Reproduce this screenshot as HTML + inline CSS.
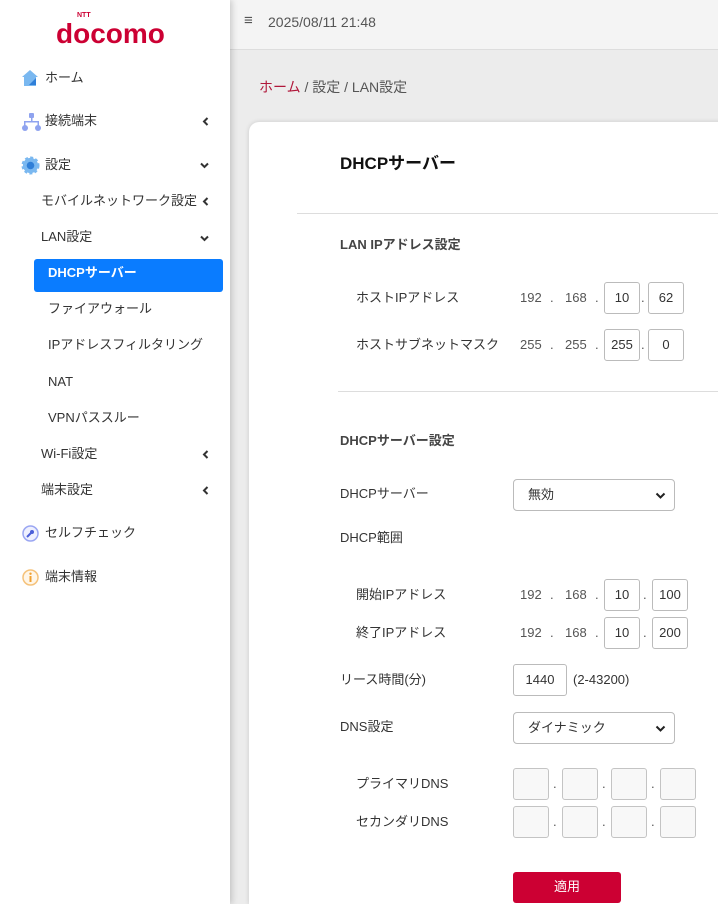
<!DOCTYPE html>
<html><head><meta charset="utf-8"><style>
*{box-sizing:border-box;margin:0;padding:0}
html,body{width:718px;height:904px;overflow:hidden}
body{background:#ececec;font-family:"Liberation Sans","Noto Sans CJK JP",sans-serif;color:#333;position:relative}
.a{position:absolute;white-space:nowrap;line-height:16px}
#side{position:absolute;left:0;top:0;width:230px;height:904px;background:#fff;box-shadow:2px 0 6px rgba(0,0,0,.18);z-index:3}
#top{position:absolute;left:230px;top:0;width:488px;height:50px;background:#f4f4f4;border-bottom:1px solid #ddd}
.si{font-size:13px;color:#333}
#card{position:absolute;left:249px;top:122px;width:480px;height:782px;background:#fff;border-radius:10px 0 0 0;box-shadow:0 0 5px rgba(0,0,0,.15)}
.t{font-size:13px;color:#333}
.g{font-size:13px;color:#555}
.box{position:absolute;width:36px;height:32px;border:1px solid #bbb;border-radius:3px;font-size:13px;text-align:center;line-height:30px;background:#fff}
.dis{background:#f8f8f8;border-color:#c4c4c4}
.sel{position:absolute;width:162px;height:32px;border:1px solid #bbb;border-radius:4px;font-size:13px;line-height:30px;padding-left:14px;background:#fff}
.sel svg{position:absolute;right:8px;top:12px}
.dot{font-size:13px;color:#555}
</style></head><body>
<div id="side">
<div class="a" style="left:56px;top:18px;font-size:28px;font-weight:bold;color:#cc0033;line-height:32px">docomo</div>
<div class="a" style="left:77px;top:12px;font-size:7px;font-weight:bold;color:#cc0033;line-height:8px">NTT</div>
<svg class="a" style="left:21px;top:69px" width="18" height="18" viewBox="0 0 18 18"><path d="M9 1 L1 8 H3 V17 H15 V8 H17 Z" fill="#7ab8f0"/><path d="M8 16 L15 9 V16 Z" fill="#2f7fd8"/></svg>
<div class="a si" style="left:45px;top:70px">ホーム</div>
<svg class="a" style="left:21px;top:112px" width="20" height="20" viewBox="0 0 20 20" fill="#8fa3ef"><rect x="8" y="1" width="5" height="5" rx="1"/><rect x="10" y="6" width="1.5" height="4"/><rect x="3" y="9" width="15" height="1.5"/><rect x="3" y="9" width="1.5" height="5"/><rect x="16.5" y="9" width="1.5" height="5"/><circle cx="4" cy="16" r="3"/><circle cx="17" cy="16" r="3"/></svg>
<div class="a si" style="left:45px;top:113px">接続端末</div>
<svg class="a" style="left:202px;top:117px" width="7" height="9" viewBox="0 0 7 9"><path d="M5.5 1 L2 4.5 L5.5 8" stroke="#333" stroke-width="2" fill="none"/></svg>
<svg class="a" style="left:21px;top:156px" width="19" height="19" viewBox="0 0 20 20"><circle cx="10" cy="10" r="8" fill="#7ab8f0" stroke="#7ab8f0" stroke-width="3" stroke-dasharray="3 2.3"/><circle cx="10" cy="10" r="4" fill="#2f7fd8"/></svg>
<div class="a si" style="left:45px;top:157px">設定</div>
<svg class="a" style="left:200px;top:162px" width="9" height="7" viewBox="0 0 9 7"><path d="M1 1.5 L4.5 5 L8 1.5" stroke="#333" stroke-width="2" fill="none"/></svg>
<div class="a si" style="left:41px;top:193px">モバイルネットワーク設定</div>
<svg class="a" style="left:202px;top:197px" width="7" height="9" viewBox="0 0 7 9"><path d="M5.5 1 L2 4.5 L5.5 8" stroke="#333" stroke-width="2" fill="none"/></svg>
<div class="a si" style="left:41px;top:229px">LAN設定</div>
<svg class="a" style="left:200px;top:235px" width="9" height="7" viewBox="0 0 9 7"><path d="M1 1.5 L4.5 5 L8 1.5" stroke="#333" stroke-width="2" fill="none"/></svg>
<div class="a" style="left:34px;top:259px;width:189px;height:33px;background:#0a7cff;border-radius:3px"></div>
<div class="a" style="left:48px;top:265px;font-size:13px;font-weight:bold;color:#fff">DHCPサーバー</div>
<div class="a si" style="left:48px;top:301px">ファイアウォール</div>
<div class="a si" style="left:48px;top:337px">IPアドレスフィルタリング</div>
<div class="a si" style="left:48px;top:374px">NAT</div>
<div class="a si" style="left:48px;top:410px">VPNパススルー</div>
<div class="a si" style="left:41px;top:446px">Wi-Fi設定</div>
<svg class="a" style="left:202px;top:450px" width="7" height="9" viewBox="0 0 7 9"><path d="M5.5 1 L2 4.5 L5.5 8" stroke="#333" stroke-width="2" fill="none"/></svg>
<div class="a si" style="left:41px;top:482px">端末設定</div>
<svg class="a" style="left:202px;top:486px" width="7" height="9" viewBox="0 0 7 9"><path d="M5.5 1 L2 4.5 L5.5 8" stroke="#333" stroke-width="2" fill="none"/></svg>
<svg class="a" style="left:22px;top:525px" width="17" height="17" viewBox="0 0 17 17"><circle cx="8.5" cy="8.5" r="7.5" fill="#eef0ff" stroke="#9aa6f2" stroke-width="1.5"/><path d="M5 12 L9 8" stroke="#4b5fd8" stroke-width="2"/><circle cx="10" cy="7" r="2" fill="#4b5fd8"/></svg>
<div class="a si" style="left:45px;top:525px">セルフチェック</div>
<svg class="a" style="left:22px;top:569px" width="17" height="17" viewBox="0 0 17 17"><circle cx="8.5" cy="8.5" r="7.5" fill="#fff6e8" stroke="#f5c27a" stroke-width="1.5"/><rect x="7.5" y="7" width="2" height="6" fill="#f0a030"/><circle cx="8.5" cy="4.7" r="1.2" fill="#f0a030"/></svg>
<div class="a si" style="left:45px;top:569px">端末情報</div>
</div>
<div id="top"></div>
<div class="a" style="left:244px;top:13px;font-size:15px;color:#555">&#8801;</div>
<div class="a" style="left:268px;top:14px;font-size:14px;color:#555">2025/08/11 21:48</div>
<div class="a" style="left:259px;top:79px;font-size:14px;color:#555"><span style="color:#b0173a">ホーム</span> / 設定 / LAN設定</div>
<div id="card"></div>
<div class="a" style="left:340px;top:155px;font-size:17px;font-weight:bold;color:#111;line-height:18px">DHCPサーバー</div>
<div class="a" style="left:297px;top:213px;width:421px;height:1px;background:#ddd"></div>
<div class="a" style="left:340px;top:237px;font-size:13px;font-weight:bold;color:#444">LAN IPアドレス設定</div>

<div class="a t" style="left:356px;top:290px">ホストIPアドレス</div>
<div class="a g" style="left:520px;top:290px">192</div><div class="a g" style="left:550px;top:290px">.</div><div class="a g" style="left:565px;top:290px">168</div><div class="a g" style="left:595px;top:290px">.</div>
<div class="box" style="left:604px;top:282px">10</div><div class="a dot" style="left:641px;top:290px">.</div><div class="box" style="left:648px;top:282px">62</div>

<div class="a t" style="left:356px;top:337px">ホストサブネットマスク</div>
<div class="a g" style="left:520px;top:337px">255</div><div class="a g" style="left:550px;top:337px">.</div><div class="a g" style="left:565px;top:337px">255</div><div class="a g" style="left:595px;top:337px">.</div>
<div class="box" style="left:604px;top:329px">255</div><div class="a dot" style="left:641px;top:337px">.</div><div class="box" style="left:648px;top:329px">0</div>

<div class="a" style="left:338px;top:391px;width:380px;height:1px;background:#ddd"></div>
<div class="a" style="left:340px;top:433px;font-size:13px;font-weight:bold;color:#444">DHCPサーバー設定</div>
<div class="a t" style="left:340px;top:486px">DHCPサーバー</div>
<div class="sel" style="left:513px;top:479px">無効<svg width="11" height="8" viewBox="0 0 11 8"><path d="M1.5 1.5 L5.5 5.5 L9.5 1.5" stroke="#222" stroke-width="2" fill="none"/></svg></div>
<div class="a t" style="left:340px;top:530px">DHCP範囲</div>

<div class="a t" style="left:356px;top:587px">開始IPアドレス</div>
<div class="a g" style="left:520px;top:587px">192</div><div class="a g" style="left:550px;top:587px">.</div><div class="a g" style="left:565px;top:587px">168</div><div class="a g" style="left:595px;top:587px">.</div>
<div class="box" style="left:604px;top:579px">10</div><div class="a dot" style="left:643px;top:587px">.</div><div class="box" style="left:652px;top:579px">100</div>

<div class="a t" style="left:356px;top:625px">終了IPアドレス</div>
<div class="a g" style="left:520px;top:625px">192</div><div class="a g" style="left:550px;top:625px">.</div><div class="a g" style="left:565px;top:625px">168</div><div class="a g" style="left:595px;top:625px">.</div>
<div class="box" style="left:604px;top:617px">10</div><div class="a dot" style="left:643px;top:625px">.</div><div class="box" style="left:652px;top:617px">200</div>

<div class="a t" style="left:340px;top:672px">リース時間(分)</div>
<div class="box" style="left:513px;top:664px;width:54px">1440</div>
<div class="a t" style="left:573px;top:672px">(2-43200)</div>
<div class="a t" style="left:340px;top:719px">DNS設定</div>
<div class="sel" style="left:513px;top:712px">ダイナミック<svg width="11" height="8" viewBox="0 0 11 8"><path d="M1.5 1.5 L5.5 5.5 L9.5 1.5" stroke="#222" stroke-width="2" fill="none"/></svg></div>
<div class="a t" style="left:356px;top:776px">プライマリDNS</div>
<div class="box dis" style="left:513px;top:768px"></div><div class="a dot" style="left:553px;top:776px">.</div>
<div class="box dis" style="left:562px;top:768px"></div><div class="a dot" style="left:602px;top:776px">.</div>
<div class="box dis" style="left:611px;top:768px"></div><div class="a dot" style="left:651px;top:776px">.</div>
<div class="box dis" style="left:660px;top:768px"></div>
<div class="a t" style="left:356px;top:814px">セカンダリDNS</div>
<div class="box dis" style="left:513px;top:806px"></div><div class="a dot" style="left:553px;top:814px">.</div>
<div class="box dis" style="left:562px;top:806px"></div><div class="a dot" style="left:602px;top:814px">.</div>
<div class="box dis" style="left:611px;top:806px"></div><div class="a dot" style="left:651px;top:814px">.</div>
<div class="box dis" style="left:660px;top:806px"></div>
<div class="a" style="left:513px;top:872px;width:108px;height:31px;background:#cc0033;border-radius:3px;color:#fff;font-size:13px;text-align:center;line-height:29px">適用</div>
</body></html>
